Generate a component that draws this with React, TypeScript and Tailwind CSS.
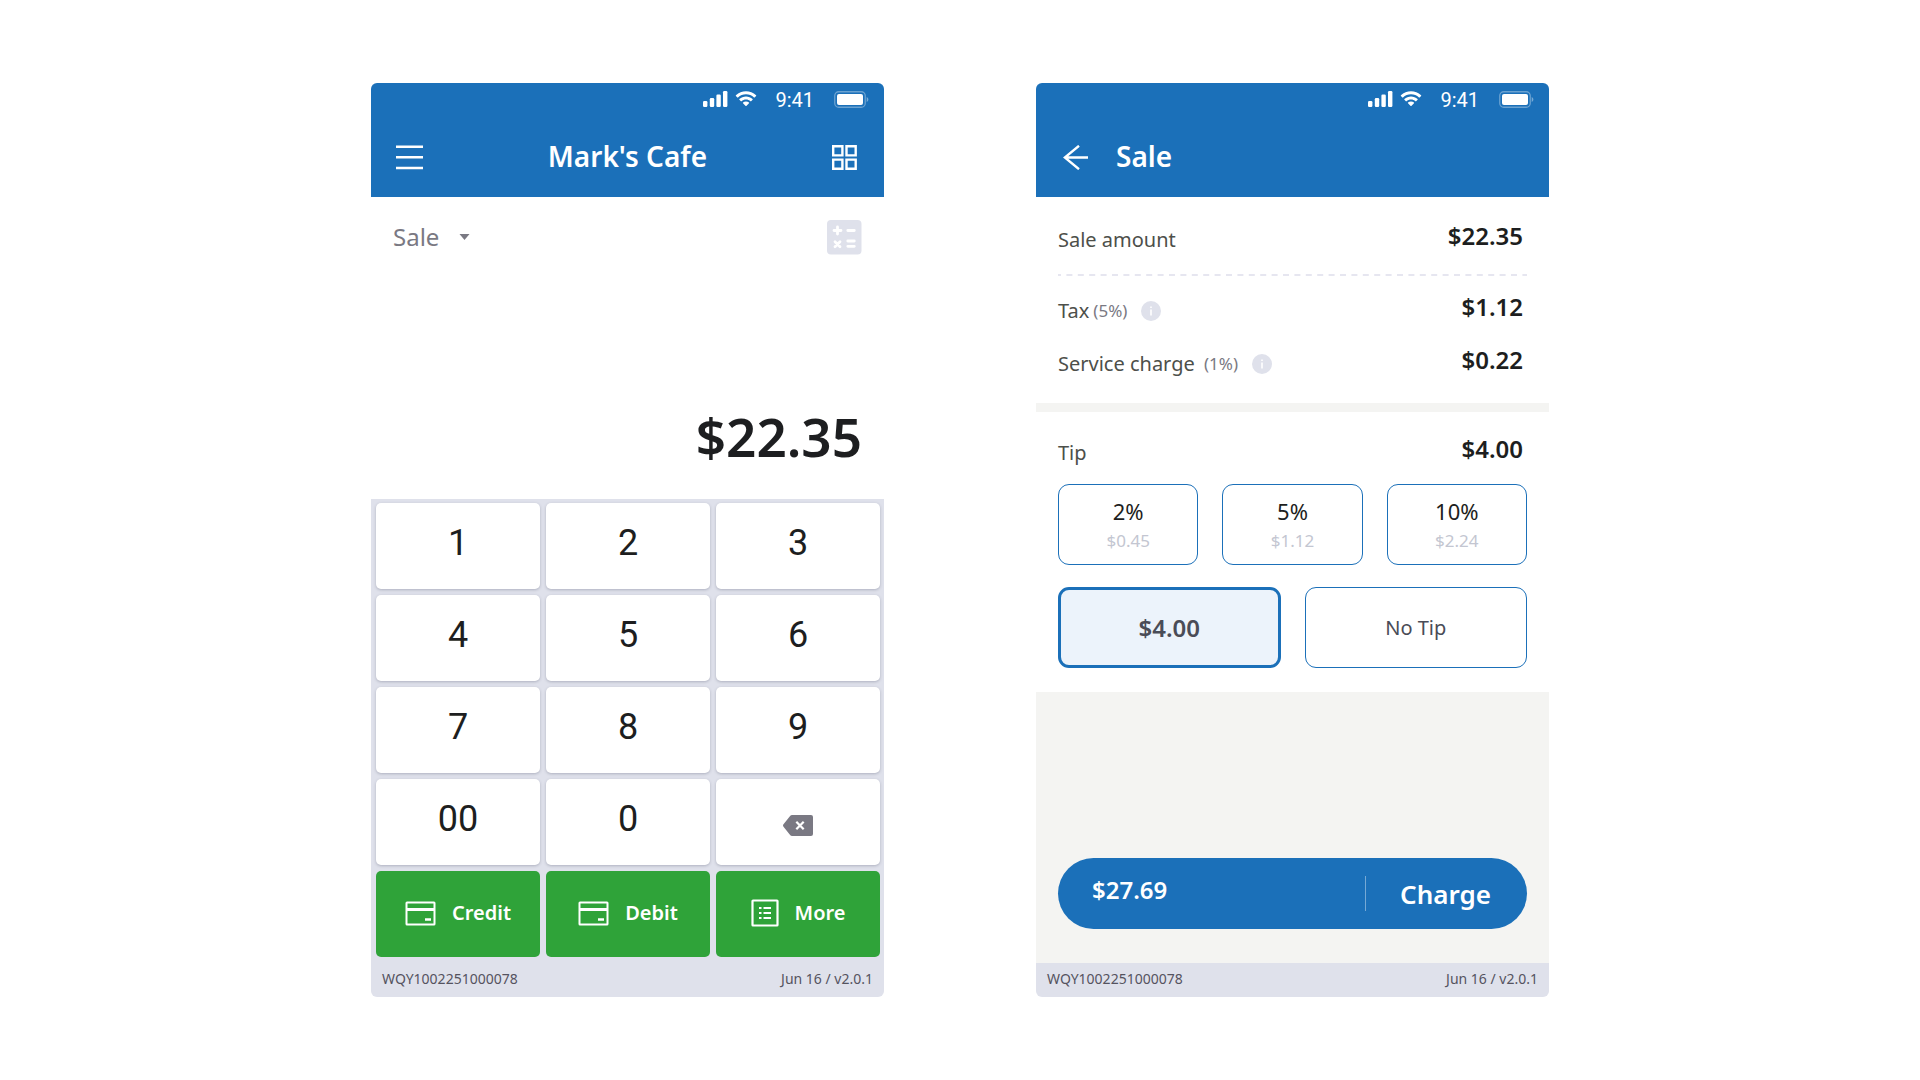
import React from "react";

interface AmountRowProps {
  label: string;
  note?: string;
  value: string;
  className?: string;
}

const tips = [
  { percent: "2%", amount: "$0.45" },
  { percent: "5%", amount: "$1.12" },
  { percent: "10%", amount: "$2.24" },
];

const StatusBar: React.FC = () => (
  <div className="flex h-8 items-center justify-end pr-[15px] text-white">
    <svg width="25" height="16" viewBox="0 0 25 16" fill="currentColor" aria-hidden="true">
      <rect x="0" y="10" width="4.4" height="6" rx="1.2" />
      <rect x="6.8" y="7" width="4.4" height="9" rx="1.2" />
      <rect x="13.4" y="3.6" width="4.4" height="12.4" rx="1.2" />
      <rect x="20" y="0" width="4.4" height="16" rx="1.2" />
    </svg>
    <svg className="ml-[7px]" width="22" height="16" viewBox="0 0 22 16" fill="currentColor" aria-hidden="true">
      <path d="M11 3.3c3 0 5.8 1.15 8 3.2.2.15.4.15.6 0l1.5-1.6c.2-.2.2-.5 0-.7C15.5-1.2 6.500-1.2.9 4.2c-.2.2-.2.5 0 .7l1.500 1.6c.2.2.4.2.6 0C5.2 4.45 8 3.3 11 3.3z" />
      <path d="M11 8.6c1.7 0 3.3.6 4.5 1.75.2.15.4.15.6 0l1.5-1.6c.2-.2.2-.5 0-.7-3.7-3.5-9.5-3.5-13.2 0-.2.2-.2.5 0 .7l1.5 1.6c.2.2.4.15.6 0C7.7 9.2 9.3 8.6 11 8.6z" />
      <path d="M14 12.2c.2-.2.2-.5 0-.7-1.7-1.45-4.3-1.45-6 0-.2.2-.2.5 0 .7l2.7 2.9c.2.2.4.2.6 0z" />
    </svg>
    <span className="ml-[18px] pt-[2px] font-['Roboto',sans-serif] text-[20px] leading-6">9:41</span>
    <svg className="ml-5" width="35" height="17" viewBox="0 0 35 17" aria-hidden="true">
      <rect x="0.75" y="0.75" width="30.5" height="15.5" rx="4" fill="none" stroke="#fff" strokeOpacity="0.35" strokeWidth="1.3" />
      <rect x="3" y="3" width="26" height="11" rx="2" fill="#fff" />
      <path d="M32.7 6v5c1-.4 1.7-1.4 1.7-2.5S33.7 6.4 32.7 6z" fill="#fff" fillOpacity="0.4" />
    </svg>
  </div>
);

const CardIcon: React.FC = () => (
  <svg width="31" height="25" viewBox="0 0 31 25" fill="none" stroke="#fff" strokeWidth="2" aria-hidden="true">
    <rect x="1.5" y="1.5" width="28" height="22" rx="0.5" />
    <path d="M2 8.5h27" strokeWidth="3" />
    <path d="M20 18.5h6" strokeWidth="2.5" />
  </svg>
);

const ListIcon: React.FC = () => (
  <svg width="28" height="28" viewBox="0 0 28 28" fill="none" stroke="#fff" strokeWidth="2.2" aria-hidden="true">
    <rect x="1.5" y="1.5" width="25" height="25" rx="0.5" />
    <path d="M8 9h2.5M8 14h2.5M8 19h2.5M12.5 9h7.5M12.5 14h7.5M12.5 19h7.5" />
  </svg>
);

const InfoIcon: React.FC = () => (
  <svg width="20" height="20" viewBox="0 0 20 20" aria-hidden="true">
    <circle cx="10" cy="10" r="10" fill="#dfe1eb" />
    <path d="M10 8.5v6M10 5.5v1.6" stroke="#fff" strokeWidth="1.6" />
  </svg>
);

const Footer: React.FC = () => (
  <footer className="flex h-[34px] items-center justify-between bg-[#dfe1eb] px-[11px] pb-[2px] text-[14px] leading-5 text-[#55535f]">
    <span>WQY1002251000078</span>
    <span>Jun 16 / v2.0.1</span>
  </footer>
);

const AmountRow: React.FC<AmountRowProps> = ({ label, note, value, className = "" }) => (
  <div className={`flex items-center justify-between ${className}`}>
    <div className="flex items-center pt-2">
      <span className="text-[20px] leading-6 whitespace-pre text-[#4d4f4a]">{label}</span>
      {note && (
        <>
          <span className="ml-1 text-[17px] leading-6 text-[#7a7983]">{note}</span>
          <button type="button" aria-label={`About ${label}`} className="ml-[14px]">
            <InfoIcon />
          </button>
        </>
      )}
    </div>
    <span className="pr-1 text-[24px] leading-8 font-semibold text-[#1d1e20]">{value}</span>
  </div>
);

const keyClass =
  "flex h-[86px] items-center justify-center rounded-[5px] bg-white pb-[6px] font-['Roboto',sans-serif] text-[36px] leading-none text-[#1d1e20] shadow-[0_1px_3px_rgba(60,65,90,0.3)]";
const payClass =
  "flex h-[86px] items-center justify-center gap-4 rounded-[5px] bg-[#2fa339] pb-[2px] text-[20px] leading-6 font-semibold text-white";

const KeypadScreen: React.FC = () => (
  <section className="flex w-full max-w-[513px] flex-col overflow-hidden rounded-[6px] bg-white">
    <header className="h-[114px] bg-[#1b70b9]">
      <StatusBar />
      <div className="flex h-[84px] items-center justify-between pr-[27px] pl-[25px]">
        <button type="button" aria-label="Menu">
          <svg width="27" height="25" viewBox="0 0 27 25" stroke="#fff" strokeWidth="2.4" aria-hidden="true">
            <path d="M0 1.7h27M0 12.3h27M0 23h27" />
          </svg>
        </button>
        <h1 className="pb-[2px] text-[28px] leading-8 font-semibold text-white">Mark's Cafe</h1>
        <button type="button" aria-label="Apps">
          <svg width="25" height="25" viewBox="0 0 25 25" fill="none" stroke="#fff" strokeWidth="2.4" aria-hidden="true">
            <path d="M1.2 1.2h9.2v9.2H1.2zM14.5 1.2h9.2v9.2h-9.2zM1.2 14.6h9.2v9.2H1.2zM14.5 14.6h9.2v9.2h-9.2z" />
          </svg>
        </button>
      </div>
    </header>

    <div className="flex h-20 items-center justify-between px-[22px]">
      <button type="button" className="flex items-center gap-5 text-[24px] leading-8 text-[#7a7983]">
        Sale
        <svg width="11" height="6" viewBox="0 0 10 6" fill="currentColor" aria-hidden="true">
          <path d="M0 0h10L5 6z" />
        </svg>
      </button>
      <button type="button" aria-label="Calculator">
        <svg width="35" height="35" viewBox="0 0 35 35" aria-hidden="true">
          <rect width="34.500" height="34.500" rx="4" fill="#dfe1eb" />
          <path
            d="M7 10.500h7M10.500 7v7M20.800 10.500h6.500M20.800 21h6.500M20.800 26.300h6.500M8 21.700l5 5M13 21.700l-5 5"
            stroke="#fff"
            strokeWidth="2.800"
            strokeLinecap="round"
          />
        </svg>
      </button>
    </div>

    <div className="flex h-[222px] items-end justify-end px-[22px] pb-[30px]">
      <output className="text-[53px] leading-16 font-semibold text-[#1d1e20]">$22.35</output>
    </div>

    <div className="grid grid-cols-3 gap-[6px] bg-[#dfe1eb] pt-1 pr-1 pb-[6px] pl-[5px]">
      {["1", "2", "3", "4", "5", "6", "7", "8", "9", "00", "0"].map((key) => (
        <button key={key} type="button" className={keyClass}>
          {key}
        </button>
      ))}
      <button
        type="button"
        aria-label="Delete"
        className="flex h-[86px] items-center justify-center rounded-[5px] bg-white pt-[6px] shadow-[0_1px_3px_rgba(60,65,90,0.3)]"
      >
        <svg width="30" height="21" viewBox="0 0 30 21" aria-hidden="true">
          <path d="M9 0h19a2 2 0 0 1 2 2v17a2 2 0 0 1-2 2H9q-1 0-1.7-.8L.5 11.7q-1-1.2 0-2.4L7.3.8Q8 0 9 0z" fill="#7a7983" />
          <path d="M13.3 6.700l7.400 7.600M20.700 6.700l-7.400 7.600" stroke="#fff" strokeWidth="2.2" />
        </svg>
      </button>
      <button type="button" className={payClass}>
        <CardIcon />
        Credit
      </button>
      <button type="button" className={payClass}>
        <CardIcon />
        Debit
      </button>
      <button type="button" className={payClass}>
        <ListIcon />
        More
      </button>
    </div>
    <Footer />
  </section>
);

const SaleScreen: React.FC = () => (
  <section className="flex w-full max-w-[513px] flex-col overflow-hidden rounded-[6px] bg-white">
    <header className="h-[114px] bg-[#1b70b9]">
      <StatusBar />
      <div className="flex h-[84px] items-center gap-7 px-[27px]">
        <button type="button" aria-label="Back">
          <svg width="25" height="25" viewBox="0 0 25 25" fill="none" stroke="#fff" strokeWidth="2.4" aria-hidden="true">
            <path d="M16 .8L1.8 12.500 16 24.200M1.800 12.500H25" />
          </svg>
        </button>
        <h1 className="pb-[2px] text-[28px] leading-8 font-semibold text-white">Sale</h1>
      </div>
    </header>

    <div className="px-[22px]">
      <AmountRow label="Sale amount" value="$22.35" className="h-[77px]" />
      <svg className="block w-full" height="2" aria-hidden="true">
        <line x1="0" y1="1" x2="100%" y2="1" stroke="#e6e6f0" strokeWidth="2" strokeDasharray="6 5.4" strokeDashoffset="3" />
      </svg>
      <AmountRow label="Tax" note="(5%)" value="$1.12" className="h-[61px]" />
      <AmountRow label="Service charge " note="(1%)" value="$0.22" className="mb-[21px] h-[45px]" />
    </div>
    <div className="h-[9px] bg-[#f4f4f2]" />

    <div className="px-[22px] pb-6">
      <AmountRow label="Tip" value="$4.00" className="h-[72px] pt-[2px]" />
      <div className="grid grid-cols-3 gap-6">
        {tips.map((tip) => (
          <button
            key={tip.percent}
            type="button"
            className="flex h-[81px] flex-col items-center justify-center rounded-[11px] border border-[#1b70b9]"
          >
            <span className="text-[22px] leading-8 text-[#1d1e20]">{tip.percent}</span>
            <span className="text-[17px] leading-7 text-[#c3c6d1]">{tip.amount}</span>
          </button>
        ))}
      </div>
      <div className="mt-[22px] grid grid-cols-2 gap-6">
        <button
          type="button"
          className="h-[81px] rounded-[11px] border-3 border-[#1b70b9] bg-[#ecf3fb] text-[24px] leading-8 font-semibold text-[#4a4c57]"
        >
          $4.00
        </button>
        <button type="button" className="h-[81px] rounded-[11px] border border-[#1b70b9] text-[20px] leading-6 text-[#4a4c57]">
          No Tip
        </button>
      </div>
    </div>

    <div className="flex flex-1 flex-col justify-end bg-[#f4f4f2] px-[22px] pb-[34px]">
      <button type="button" className="flex h-[71px] items-center rounded-full bg-[#1b70b9] pr-9 pl-[34px] font-semibold text-white">
        <span className="pb-2 text-[24px] leading-8">$27.69</span>
        <span className="ml-auto h-[35px] w-px bg-white/40" />
        <span className="ml-[34px] text-[26px] leading-8">Charge</span>
      </button>
    </div>
    <Footer />
  </section>
);

const App: React.FC = () => {
  return (
    <main className="flex min-h-screen flex-wrap items-center justify-center bg-white font-['Noto_Sans',sans-serif]">
      <div className="flex w-full flex-wrap items-stretch justify-center gap-x-[152px] gap-y-10">
        <KeypadScreen />
        <SaleScreen />
      </div>
    </main>
  );
};

export default App;
